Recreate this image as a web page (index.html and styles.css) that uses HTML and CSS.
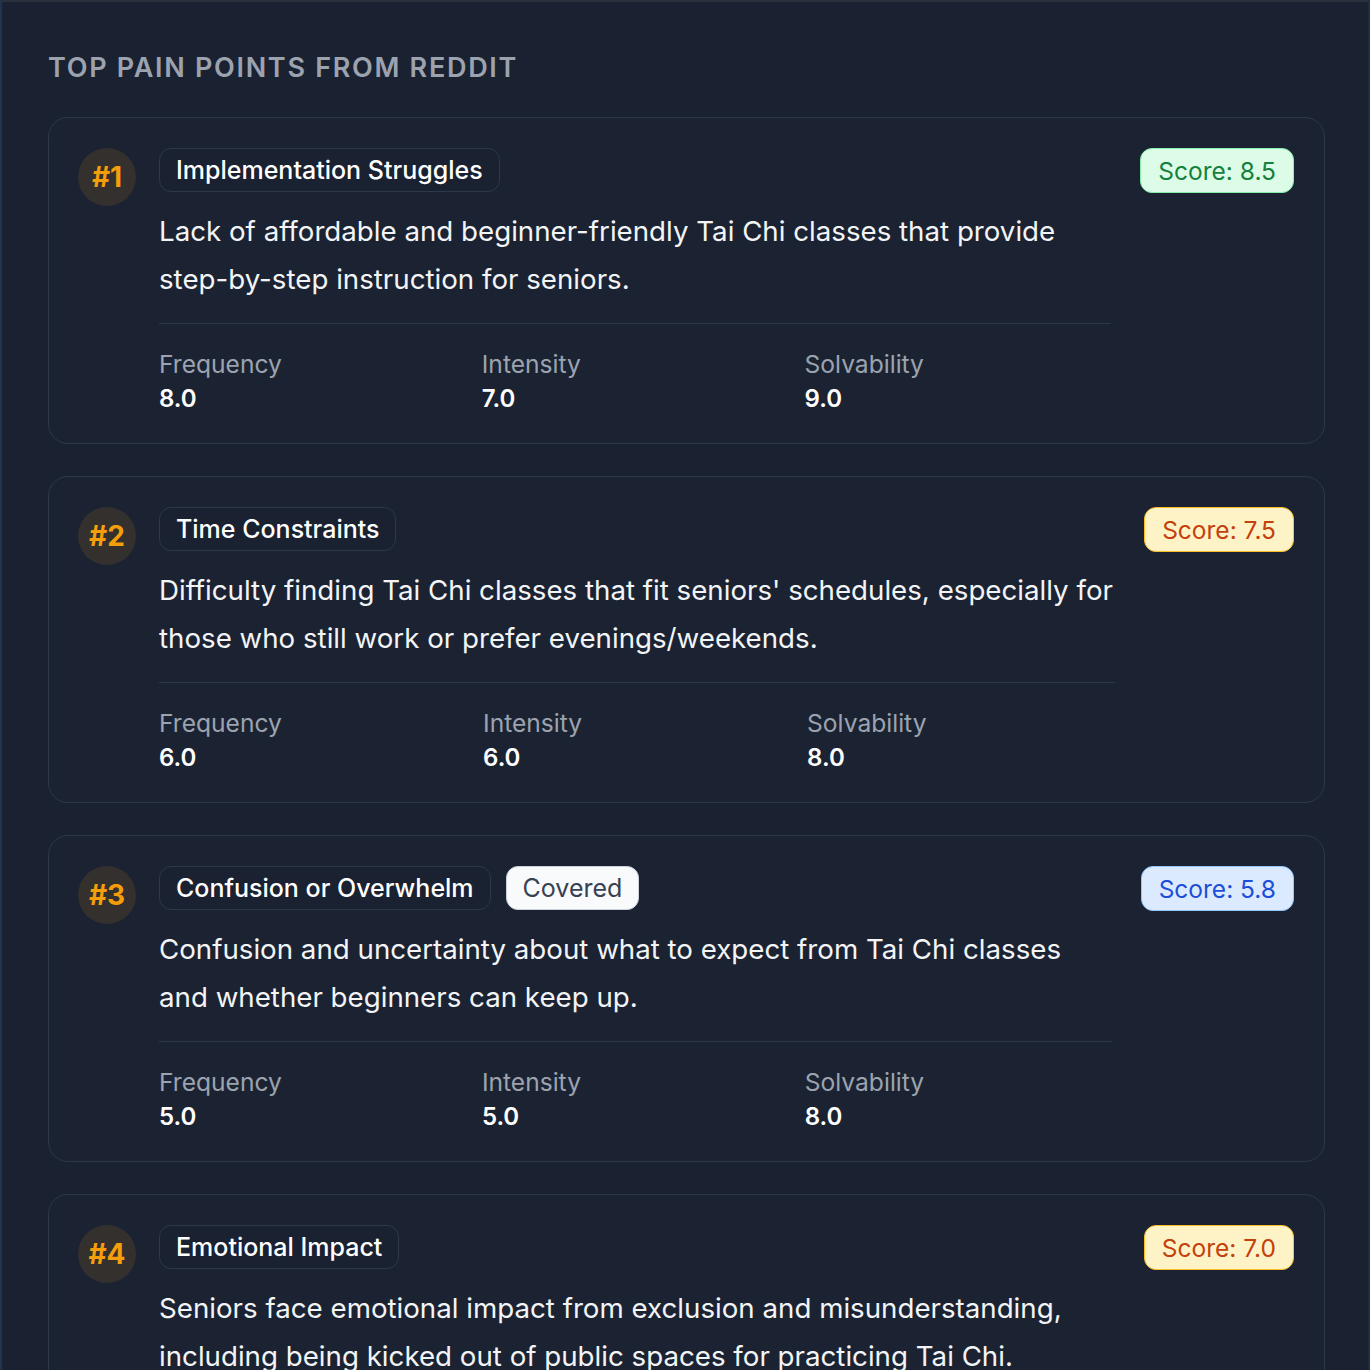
FILE: index.html
```html
<!DOCTYPE html>
<html lang="en">
<head>
<meta charset="utf-8">
<title>Top Pain Points</title>
<link rel="stylesheet" href="styles.css">
</head>
<body>
<main class="panel">
  <h2 class="section-title">Top Pain Points from Reddit</h2>
  <div class="list">
    <article class="card">
      <div class="rank">#1</div>
      <div class="body">
        <div class="tags"><span class="tag">Implementation Struggles</span></div>
        <p class="desc">Lack of affordable and beginner-friendly Tai Chi classes that provide step-by-step instruction for seniors.</p>
        <div class="metrics">
          <div class="metric"><div class="m-label">Frequency</div><div class="m-value">8.0</div></div>
          <div class="metric"><div class="m-label">Intensity</div><div class="m-value">7.0</div></div>
          <div class="metric"><div class="m-label">Solvability</div><div class="m-value">9.0</div></div>
        </div>
      </div>
      <div class="score score-green">Score: 8.5</div>
    </article>
    <article class="card">
      <div class="rank">#2</div>
      <div class="body">
        <div class="tags"><span class="tag">Time Constraints</span></div>
        <p class="desc">Difficulty finding Tai Chi classes that fit seniors' schedules, especially for those who still work or prefer evenings/weekends.</p>
        <div class="metrics">
          <div class="metric"><div class="m-label">Frequency</div><div class="m-value">6.0</div></div>
          <div class="metric"><div class="m-label">Intensity</div><div class="m-value">6.0</div></div>
          <div class="metric"><div class="m-label">Solvability</div><div class="m-value">8.0</div></div>
        </div>
      </div>
      <div class="score score-yellow">Score: 7.5</div>
    </article>
    <article class="card">
      <div class="rank">#3</div>
      <div class="body">
        <div class="tags"><span class="tag">Confusion or Overwhelm</span><span class="tag tag-covered">Covered</span></div>
        <p class="desc">Confusion and uncertainty about what to expect from Tai Chi classes and whether beginners can keep up.</p>
        <div class="metrics">
          <div class="metric"><div class="m-label">Frequency</div><div class="m-value">5.0</div></div>
          <div class="metric"><div class="m-label">Intensity</div><div class="m-value">5.0</div></div>
          <div class="metric"><div class="m-label">Solvability</div><div class="m-value">8.0</div></div>
        </div>
      </div>
      <div class="score score-blue">Score: 5.8</div>
    </article>
    <article class="card">
      <div class="rank">#4</div>
      <div class="body">
        <div class="tags"><span class="tag">Emotional Impact</span></div>
        <p class="desc">Seniors face emotional impact from exclusion and misunderstanding, including being kicked out of public spaces for practicing Tai Chi.</p>
        <div class="metrics">
          <div class="metric"><div class="m-label">Frequency</div><div class="m-value">7.0</div></div>
          <div class="metric"><div class="m-label">Intensity</div><div class="m-value">8.0</div></div>
          <div class="metric"><div class="m-label">Solvability</div><div class="m-value">6.0</div></div>
        </div>
      </div>
      <div class="score score-yellow">Score: 7.0</div>
    </article>
  </div>
</main>
</body>
</html>
```

FILE: styles.css
```css
* { box-sizing: border-box; }
html, body {
  margin: 0;
  padding: 0;
  background: #1a2232;
  height: 1370px;
  overflow: hidden;
}
body {
  font-family: Inter, "Noto Sans", "Liberation Sans", sans-serif;
  color: #f3f4f6;
}
.panel {
  min-height: 1370px;
  border-top: 2px solid #2b313c;
  border-left: 2px solid #1d3550;
  border-right: 2px solid #222c3a;
  padding: 47px 43px 0 46px;
}
.section-title {
  margin: 0 0 30px 0;
  font-size: 27px;
  line-height: 38px;
  font-weight: 600;
  letter-spacing: 1.7px;
  text-transform: uppercase;
  color: #9ca3af;
}
.list {
  display: flex;
  flex-direction: column;
  gap: 32px;
}
.card {
  display: flex;
  align-items: flex-start;
  border: 1px solid #2c384b;
  border-radius: 20px;
  padding: 30px 30px 27px 29px;
  background: #1b2333;
}
.rank {
  flex: 0 0 58px;
  width: 58px;
  height: 58px;
  border-radius: 50%;
  background: #33302e;
  color: #f59e0b;
  font-weight: 700;
  font-size: 28px;
  display: flex;
  align-items: center;
  justify-content: center;
  margin-right: 23px;
}
.body {
  flex: 1 1 auto;
  min-width: 0;
  margin-right: 29px;
}
.tags {
  display: flex;
  gap: 15px;
}
.tag {
  display: inline-flex;
  align-items: center;
  height: 44px;
  padding: 0 16px;
  border: 1.5px solid #2c384b;
  border-radius: 12px;
  background: #1a2130;
  color: #ffffff;
  font-size: 25px;
  font-weight: 500;
}
.tag-covered {
  background: #f8fafc;
  border-color: #cbd2da;
  color: #374151;
  font-weight: 400;
}
.desc {
  margin: 15px 0 0 0;
  font-size: 27.7px;
  line-height: 48px;
  color: #f3f4f6;
}
.metrics {
  display: grid;
  grid-template-columns: repeat(3, 1fr);
  gap: 16px;
  margin-top: 20px;
  border-top: 1.5px solid #2c384b;
  padding-top: 22px;
}
.m-label {
  font-size: 24.6px;
  line-height: 36px;
  color: #9ca3af;
}
.m-value {
  font-size: 24px;
  line-height: 34px;
  font-weight: 600;
  color: #ffffff;
}
.score {
  flex: 0 0 auto;
  height: 45px;
  display: flex;
  align-items: center;
  padding: 0 17px;
  border-radius: 12px;
  font-size: 24.5px;
  border: 1.5px solid;
}
.score-green { background: #dcfce7; border-color: #86efac; color: #15803d; }
.score-yellow { background: #fef3c7; border-color: #fbbf24; color: #c2410c; }
.score-blue { background: #dbeafe; border-color: #93c5fd; color: #1d4ed8; }
```
